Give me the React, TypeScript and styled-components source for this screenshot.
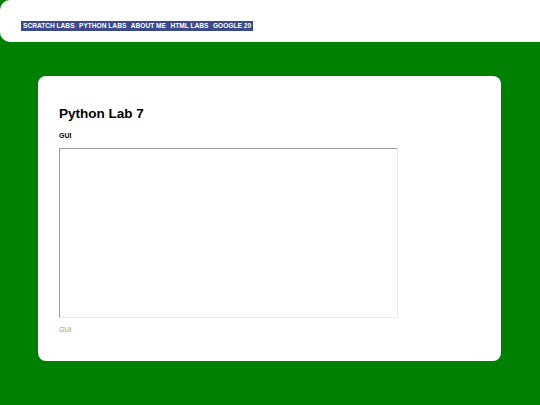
import * as React from "react";
import styled, { createGlobalStyle } from "styled-components";

const GlobalStyle = createGlobalStyle`
  html, body {
    margin: 0;
    padding: 0;
    background: #008000;
    font-family: "Liberation Sans", Arial, sans-serif;
  }
`;

const links = ["SCRATCH LABS", "PYTHON LABS", "ABOUT ME", "HTML LABS", "GOOGLE 20"];

export default function App() {
  return (
    <Page>
      <GlobalStyle />
      <Header>
        <Nav>
          {links.map((l) => (
            <NavLink key={l}>{l}</NavLink>
          ))}
        </Nav>
      </Header>
      <Card>
        <Title>Python Lab 7</Title>
        <Subtitle>GUI</Subtitle>
        <Frame />
        <Caption>GUI</Caption>
      </Card>
    </Page>
  );
}

const Page = styled.div`
  min-height: 405px;
  display: flex;
  flex-direction: column;
`;

const Header = styled.header`
  background: #fff;
  height: 42px;
  border-radius: 10px 0 0 10px;
  padding: 21px 0 0 21px;
  box-sizing: border-box;
  display: flex;
  align-items: flex-start;
`;

const Nav = styled.nav`
  display: flex;
  background: #3c4a8b;
  height: 10px;
  align-items: center;
  padding: 0 2px;
  gap: 4.5px;
`;

const NavLink = styled.span`
  color: #fff;
  font-size: 6.6px;
  font-weight: bold;
  white-space: nowrap;
  line-height: 10px;
`;

const Card = styled.main`
  background: #fff;
  margin: 34px 0 0 38px;
  width: 463px;
  height: 285px;
  border-radius: 8px;
  box-sizing: border-box;
  padding: 30px 0 0 21px;
  display: flex;
  flex-direction: column;
  align-items: flex-start;
`;

const Title = styled.h1`
  margin: 0;
  font-size: 13.5px;
  font-weight: bold;
  color: #000;
  line-height: 16px;
`;

const Subtitle = styled.h2`
  margin: 9px 0 0;
  font-size: 7px;
  font-weight: bold;
  color: #000;
  line-height: 9px;
`;

const Frame = styled.div`
  margin-top: 8px;
  width: 339px;
  height: 170px;
  box-sizing: border-box;
  border-style: solid;
  border-width: 1px;
  border-color: #9a9a9a #ebebeb #ebebeb #9a9a9a;
  background: #fff;
`;

const Caption = styled.p`
  margin: 7px 0 0;
  font-size: 7px;
  color: #8fa840;
  line-height: 9px;
`;
